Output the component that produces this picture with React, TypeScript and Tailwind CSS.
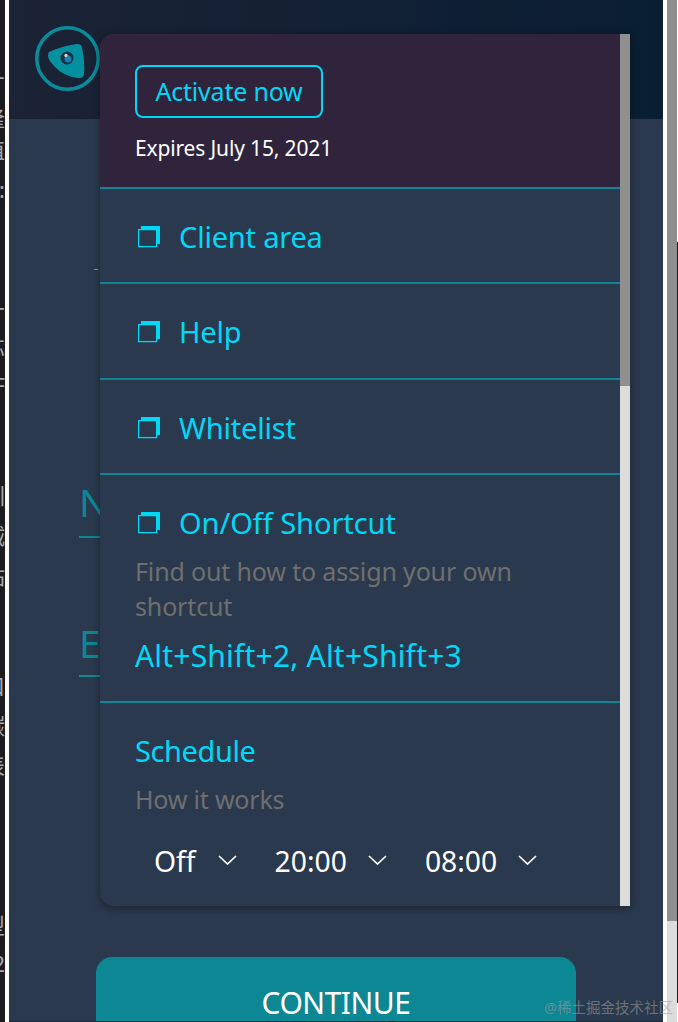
const sans = "font-['Noto_Sans','Noto_Sans_CJK_SC',sans-serif]";

function CopyIcon() {
  return (
    <svg width="24" height="22" viewBox="0 0 24 22" className="shrink-0">
      <path d="M4 0H23V18H20V3H4z" fill="#00d8f8" />
      <rect x="1.6" y="3.6" width="18" height="17" fill="none" stroke="#00d8f8" strokeWidth="1.3" />
    </svg>
  );
}

function Chevron() {
  return (
    <svg width="19" height="10" viewBox="0 0 19 10" className="mb-[3px] shrink-0">
      <path d="M1 1l8.5 8L18 1" fill="none" stroke="#fff" strokeWidth="1.7" />
    </svg>
  );
}

function Logo() {
  return (
    <svg width="66" height="66" viewBox="0 0 66 66" className="ml-[26px] mt-[26px] block">
      <circle cx="32.5" cy="32.5" r="30.7" fill="none" stroke="#0a8c9a" strokeWidth="3.5" />
      <path d="M14 26Q27 20 42 18Q47 18 47 22Q50 36 49 48Q48 53 43 52Q28 50 20 41Q13 34 13 30Q13 27 14 26z" fill="#04919f" />
      <circle cx="32" cy="32" r="6.5" fill="#1c3048" />
      <circle cx="33" cy="33" r="3.5" fill="#1a7fb5" />
      <circle cx="31" cy="29.5" r="1.7" fill="#c9d3d9" />
    </svg>
  );
}

function LinkRow({ label, height }: { label: string; height: string }) {
  return (
    <div className={`flex items-center gap-[18px] border-t-2 border-[#0d8794] pl-[37px] pt-[2px] ${height}`}>
      <CopyIcon />
      <span className="text-[29px] tracking-[-0.2px] text-[#00d8f8]">{label}</span>
    </div>
  );
}

const strip = [
  { text: "丁", mt: "mt-[72px]" },
  { text: "隆", mt: "mt-[6px]" },
  { text: "值", mt: "mt-[6px]" },
  { text: ":", mt: "mt-[14px]" },
  { text: "十", mt: "mt-[94px]" },
  { text: "芯", mt: "mt-[12px]" },
  { text: "F", mt: "mt-[12px]" },
  { text: "圳", mt: "mt-[84px]" },
  { text: "诚", mt: "mt-[14px]" },
  { text: "站", mt: "mt-[14px]" },
  { text: "口", mt: "mt-[84px]" },
  { text: "碳", mt: "mt-[14px]" },
  { text: "表", mt: "mt-[14px]" },
  { text: "型", mt: "mt-[134px]" },
  { text: "2", mt: "mt-[12px]" },
];

export default function App() {
  return (
    <div className={`relative flex h-[1022px] w-[678px] overflow-hidden bg-white ${sans}`}>
      <div className="flex w-[5px] shrink-0 flex-col items-end overflow-hidden bg-[#1c1c20] text-[22px] leading-[26px] text-[#a9a9ad]">
        {strip.map((item, i) => (
          <span key={i} className={`block shrink-0 whitespace-nowrap ${item.mt}`}>{item.text}</span>
        ))}
      </div>
      <div className="w-[4px] shrink-0 bg-white" />

      <main className="relative h-[1022px] w-[654px] shrink-0 overflow-hidden bg-[#2a394d]">
        <header className="h-[119px] overflow-hidden bg-[linear-gradient(90deg,#1b2335,#0a1e32)]">
          <Logo />
        </header>

        <div className="ml-[85px] mt-[150px] h-[1px] w-[4px] bg-[#8a8f96]" />

        <div className="ml-[70px] mt-[208px] h-[60px] w-[500px] border-b-2 border-[#0d8794] text-[39px] leading-[48px] text-[#0d8794]">N</div>
        <div className="ml-[70px] mt-[79px] h-[60px] w-[500px] border-b-2 border-[#0d8794] text-[39px] leading-[52px] text-[#0d8794]">E</div>

        <button className="ml-[87px] mt-[280px] flex h-[90px] w-[480px] items-center justify-center rounded-[16px] bg-[#0d8794] text-[30px] tracking-[-0.5px] text-white">
          CONTINUE
        </button>

        <div className="absolute bottom-0 left-0 h-[1px] w-full bg-[#1a2c3c]" />

        <div className="absolute left-[91px] top-[34px] flex h-[872px] w-[530px] overflow-hidden rounded-l-[14px] bg-[#2a394d] shadow-[0_2px_10px_rgba(0,0,0,0.35)]">
          <div className="w-[520px] shrink-0">
            <div className="h-[153px] bg-[#2f243b] pl-[35px] pt-[31px]">
              <div className="flex h-[53px] w-[188px] items-center justify-center rounded-[8px] border-2 border-[#00d8f8] text-[25px] tracking-[-0.2px] text-[#00d8f8]">
                Activate now
              </div>
              <p className="mt-[16px] text-[21px] leading-[28px] tracking-[-0.15px] text-white">Expires July 15, 2021</p>
            </div>

            <LinkRow label="Client area" height="h-[95px]" />
            <LinkRow label="Help" height="h-[96px]" />
            <LinkRow label="Whitelist" height="h-[95px]" />

            <div className="h-[228px] border-t-2 border-[#0d8794] pl-[35px] pt-[24px]">
              <div className="ml-[2px] flex h-[48px] items-center gap-[18px]">
                <CopyIcon />
                <span className="text-[29px] tracking-[-0.05px] text-[#00d8f8]">On/Off Shortcut</span>
              </div>
              <p className="mt-[7px] w-[400px] text-[25px] leading-[35px] tracking-[-0.15px] text-[#6f6f6f]">Find out how to assign your own shortcut</p>
              <p className="mt-[12px] text-[30px] leading-[40px] tracking-[0.2px] text-[#00d8f8]">Alt+Shift+2, Alt+Shift+3</p>
            </div>

            <div className="h-[205px] border-t-2 border-[#0d8794] pl-[35px] pt-[24px]">
              <p className="text-[29px] leading-[48px] tracking-[-0.4px] text-[#00d8f8]">Schedule</p>
              <p className="mt-[7px] text-[25px] leading-[35px] tracking-[-0.2px] text-[#6f6f6f]">How it works</p>
              <div className="ml-[19px] mt-[22px] flex h-[44px] items-center text-[28.3px] text-white">
                <div className="flex items-center gap-[22px]">
                  <span>Off</span>
                  <Chevron />
                </div>
                <div className="ml-[38px] flex items-center gap-[21px]">
                  <span>20:00</span>
                  <Chevron />
                </div>
                <div className="ml-[38px] flex items-center gap-[21px]">
                  <span>08:00</span>
                  <Chevron />
                </div>
              </div>
            </div>
          </div>

          <div className="w-[10px] shrink-0 bg-[#dcdcdc]">
            <div className="h-[352px] bg-[#8f8f8f]" />
          </div>
        </div>
      </main>

      <div className="w-[4px] shrink-0 bg-white" />
      <div className="w-[10px] shrink-0 bg-[#dcdcdc]">
        <div className="h-[921px] bg-[#8f8f8f]" />
      </div>
      <div className="flex w-[1px] shrink-0 flex-col bg-white">
        <div className="mt-[242px] h-[761px] bg-[#1c1c20]" />
      </div>

      <span className="absolute left-[544px] top-[997px] text-[14.5px] leading-[20px] text-[#9a9a9a]/60">@稀土掘金技术社区</span>
    </div>
  );
}
